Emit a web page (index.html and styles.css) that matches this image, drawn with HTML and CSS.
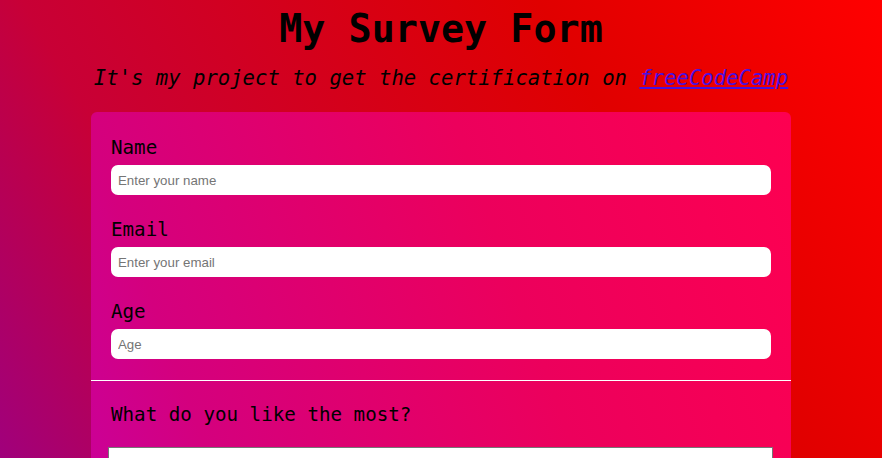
FILE: index.html
```html
<!DOCTYPE html>
<html lang="en">
<head>
<meta charset="utf-8">
<title>My Survey Form</title>
<link rel="stylesheet" href="styles.css">
</head>
<body>
  <header class="header">
    <h1 class="title">My Survey Form</h1>
    <p class="subtitle">It's my project to get the certification on <a class="link" href="#">freeCodeCamp</a></p>
  </header>
  <form class="card">
    <div class="section">
      <div class="field">
        <label class="label" for="name">Name</label>
        <input class="input" id="name" type="text" placeholder="Enter your name">
      </div>
      <div class="field">
        <label class="label" for="email">Email</label>
        <input class="input" id="email" type="email" placeholder="Enter your email">
      </div>
      <div class="field">
        <label class="label" for="age">Age</label>
        <input class="input" id="age" type="number" placeholder="Age">
      </div>
    </div>
    <hr class="divider">
    <div class="section section-second">
      <div class="field field-wide">
        <label class="label" for="like">What do you like the most?</label>
        <div class="box" id="like"></div>
      </div>
    </div>
  </form>
</body>
</html>
```
FILE: styles.css
```css
html, body {
  margin: 0;
  padding: 0;
}
body {
  min-height: 100vh;
  font-family: "DejaVu Sans Mono", monospace;
  color: #000;
  background: linear-gradient(60deg, #a0007c 0%, #c80036 25%, #e00000 70%, #ff0000 100%) fixed;
}
.header {
  display: flex;
  flex-direction: column;
  align-items: center;
  padding-top: 6px;
}
.title {
  margin: 0;
  font-size: 38.4px;
  line-height: 45px;
  font-weight: bold;
}
.subtitle {
  margin: 15px 0 0;
  font-size: 20.6px;
  line-height: 24px;
  font-style: italic;
}
.link {
  color: #4a10e0;
}
.card {
  width: 700px;
  margin: 22px auto 0;
  border-radius: 6px 6px 0 0;
  background: linear-gradient(70deg, #c400a8 0%, #d4007e 20%, #ec005c 55%, #ff0050 90%) fixed;
  padding-bottom: 200px;
}
.section {
  display: flex;
  flex-direction: column;
  gap: 24px;
  padding: 25px 20px 21px;
}
.section-second {
  padding-top: 23px;
}
.field {
  display: flex;
  flex-direction: column;
  gap: 6px;
}
.field-wide {
  gap: 21px;
}
.label {
  font-size: 19.2px;
  line-height: 22px;
}
.input {
  box-sizing: border-box;
  height: 30px;
  width: 100%;
  border: none;
  border-radius: 7px;
  background: #fff;
  padding: 0 7px;
  font-family: "Liberation Sans", Arial, sans-serif;
  font-size: 13.3px;
  outline: none;
}
.input::placeholder {
  color: #757575;
}
.divider {
  margin: 0;
  border: none;
  height: 1px;
  background: #fff;
}
.box {
  box-sizing: border-box;
  width: 665px;
  margin-left: -3px;
  height: 60px;
  background: #fff;
  border: 1px solid #767676;
}
```
